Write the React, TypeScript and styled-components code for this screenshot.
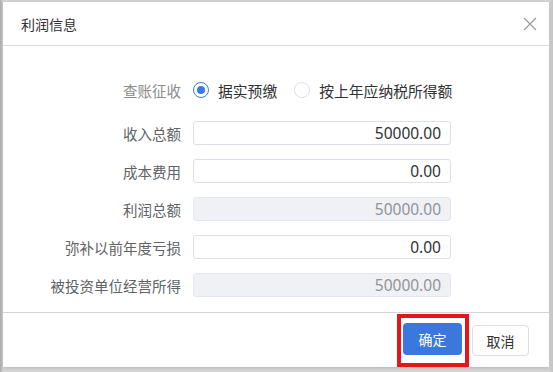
import React, { useState } from 'react';
import styled, { createGlobalStyle } from 'styled-components';

const GlobalStyle = createGlobalStyle`
  html, body {
    margin: 0;
    padding: 0;
    background: #b8b8b8;
  }
  body {
    font-family: "Noto Sans CJK SC", "Microsoft YaHei", sans-serif;
  }
`;

const fields = [
  { label: '收入总额', value: '50000.00', disabled: false },
  { label: '成本费用', value: '0.00', disabled: false },
  { label: '利润总额', value: '50000.00', disabled: true },
  { label: '弥补以前年度亏损', value: '0.00', disabled: false },
  { label: '被投资单位经营所得', value: '50000.00', disabled: true },
];

export default function App() {
  const [mode, setMode] = useState('actual');

  return (
    <>
      <GlobalStyle />
      <Backdrop>
        <Dialog>
          <Header>
            <Title>利润信息</Title>
            <CloseButton aria-label="关闭">
              <svg width="14" height="14" viewBox="0 0 14 14">
                <path d="M1 1 L13 13 M13 1 L1 13" stroke="#9a9a9a" strokeWidth="1.1" fill="none" />
              </svg>
            </CloseButton>
          </Header>
          <Body>
            <RadioRow>
              <Label muted>查账征收</Label>
              <RadioGroup>
                <RadioItem onClick={() => setMode('actual')}>
                  <RadioDot checked={mode === 'actual'} />
                  据实预缴
                </RadioItem>
                <RadioItem onClick={() => setMode('lastYear')}>
                  <RadioDot checked={mode === 'lastYear'} />
                  按上年应纳税所得额
                </RadioItem>
              </RadioGroup>
            </RadioRow>
            {fields.map((f) => (
              <Row key={f.label}>
                <Label>{f.label}</Label>
                <Input defaultValue={f.value} disabled={f.disabled} />
              </Row>
            ))}
          </Body>
          <Footer>
            <Highlight>
              <PrimaryButton>确定</PrimaryButton>
            </Highlight>
            <PlainButton>取消</PlainButton>
          </Footer>
        </Dialog>
      </Backdrop>
    </>
  );
}

const Backdrop = styled.div`
  width: 553px;
  height: 372px;
  box-sizing: border-box;
  padding: 2px 4px 5px 3px;
  background: linear-gradient(to right, #a9a9a9 0, #d4d4d4 3px, #d4d4d4 calc(100% - 4px), #c4c4c4 100%);
`;

const Dialog = styled.div`
  height: 100%;
  background: #fff;
  display: flex;
  flex-direction: column;
  box-shadow: 0 1px 3px rgba(0, 0, 0, 0.15);
`;

const Header = styled.div`
  height: 44px;
  box-sizing: border-box;
  display: flex;
  align-items: center;
  justify-content: space-between;
  padding: 0 12px 0 18px;
  border-bottom: 1px solid #dcdcdc;
`;

const Title = styled.div`
  font-size: 14px;
  color: #303133;
`;

const CloseButton = styled.button`
  border: none;
  background: none;
  padding: 0;
  display: flex;
  cursor: pointer;
`;

const Body = styled.div`
  flex: 1;
  padding: 32px 0 0;
  display: flex;
  flex-direction: column;
  gap: 14px;
`;

const Row = styled.div`
  display: grid;
  grid-template-columns: 178px 258px;
  column-gap: 12px;
  align-items: center;
  height: 24px;
`;

const RadioRow = styled(Row)`
  margin-bottom: 5px;
`;

const Label = styled.div<{ muted?: boolean }>`
  text-align: right;
  font-size: 14.5px;
  color: ${({ muted }) => (muted ? '#8c8c8c' : '#606266')};
  white-space: nowrap;
`;

const RadioGroup = styled.div`
  display: flex;
  gap: 17px;
  align-items: center;
`;

const RadioItem = styled.label`
  display: flex;
  align-items: center;
  gap: 9px;
  font-size: 14.8px;
  color: #303133;
  cursor: pointer;
  white-space: nowrap;
`;

const RadioDot = styled.span<{ checked: boolean }>`
  width: 16px;
  height: 16px;
  box-sizing: border-box;
  border-radius: 50%;
  border: 1px solid ${({ checked }) => (checked ? '#3a7be0' : '#dcdfe6')};
  background: #fff;
  display: flex;
  align-items: center;
  justify-content: center;

  &::after {
    content: '';
    width: 8px;
    height: 8px;
    border-radius: 50%;
    background: ${({ checked }) => (checked ? '#3a7be0' : 'transparent')};
  }
`;

const Input = styled.input`
  height: 24px;
  box-sizing: border-box;
  border: 1px solid #dcdfe6;
  border-radius: 3px;
  padding: 0 9px;
  text-align: right;
  font-family: "Noto Sans", "Noto Sans CJK SC", sans-serif;
  font-size: 15.5px;
  color: #303133;
  background: #fff;
  outline: none;

  &:disabled {
    background: #f0f1f4;
    color: #8f9399;
    border-color: #e4e7ed;
  }
`;

const Footer = styled.div`
  height: 55px;
  box-sizing: border-box;
  border-top: 1px solid #d4d4d4;
  display: flex;
  align-items: flex-start;
  justify-content: flex-end;
  padding: 1px 20px 0 0;
  gap: 3px;
`;

const Highlight = styled.div`
  border: 4px solid #e8141c;
  padding: 5px 3px 8px 2px;
  display: flex;
`;

const PrimaryButton = styled.button`
  width: 59px;
  height: 32px;
  border: none;
  border-radius: 4px;
  background: #3a78de;
  color: #fff;
  font-family: "Noto Sans CJK SC", sans-serif;
  font-size: 14px;
  cursor: pointer;
`;

const PlainButton = styled.button`
  width: 57px;
  height: 31px;
  margin-top: 11px;
  border: 1px solid #dcdfe6;
  border-radius: 4px;
  background: #fff;
  color: #303133;
  font-family: "Noto Sans CJK SC", sans-serif;
  font-size: 14px;
  cursor: pointer;
`;
